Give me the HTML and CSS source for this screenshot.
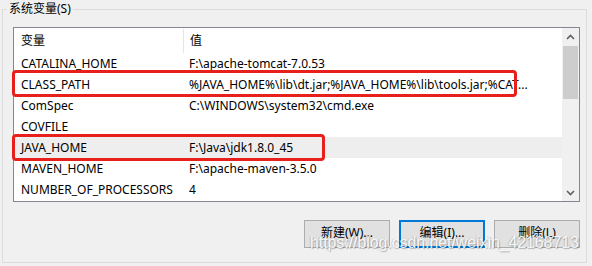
FILE: index.html
```html
<!DOCTYPE html>
<html lang="zh-CN">
<head>
    <meta charset="UTF-8">
    <title>系统变量</title>
    <link rel="stylesheet" href="styles.css">
</head>
<body>
    <div class="group">
        <div class="group-title">系统变量(S)</div>

        <div class="list">
            <div class="list-body">
                <div class="list-head">
                    <div class="col-name">变量</div>
                    <div class="col-value">值</div>
                </div>
                <div class="row"><div class="col-name">CATALINA_HOME</div><div class="col-value">F:\apache-tomcat-7.0.53</div></div>
                <div class="row"><div class="col-name">CLASS_PATH</div><div class="col-value">%JAVA_HOME%\lib\dt.jar;%JAVA_HOME%\lib\tools.jar;%CAT...</div></div>
                <div class="row"><div class="col-name">ComSpec</div><div class="col-value">C:\WINDOWS\system32\cmd.exe</div></div>
                <div class="row"><div class="col-name">COVFILE</div><div class="col-value"></div></div>
                <div class="row selected"><div class="col-name">JAVA_HOME</div><div class="col-value">F:\Java\jdk1.8.0_45</div></div>
                <div class="row"><div class="col-name">MAVEN_HOME</div><div class="col-value">F:\apache-maven-3.5.0</div></div>
                <div class="row"><div class="col-name">NUMBER_OF_PROCESSORS</div><div class="col-value">4</div></div>
            </div>

            <!-- vertical scrollbar -->
            <div class="scrollbar">
                <div class="scroll-btn">
                    <svg width="9" height="6" viewBox="0 0 9 6"><path d="M1 5 L4.5 1.5 L8 5" fill="none" stroke="#606060" stroke-width="1.6"/></svg>
                </div>
                <div class="thumb"></div>
                <div class="scroll-btn bottom">
                    <svg width="9" height="6" viewBox="0 0 9 6"><path d="M1 1 L4.5 4.5 L8 1" fill="none" stroke="#606060" stroke-width="1.6"/></svg>
                </div>
            </div>
        </div>

        <div class="actions">
            <button class="btn">新建(W)...</button>
            <button class="btn primary">编辑(I)...</button>
            <button class="btn">删除(L)</button>
        </div>
    </div>

    <!-- annotations drawn on top of the screenshot -->
    <div class="mark mark-classpath"></div>
    <div class="mark mark-javahome"></div>
    <div class="watermark">https://blog.csdn.net/weixin_42168713</div>
</body>
</html>
```

FILE: styles.css
```css
body {
    margin: 0;
    background-color: #f0f0f0;
    font-family: "Noto Sans", "Noto Sans CJK SC", sans-serif;
    font-size: 12px;
    color: #000;
    width: 592px;
    height: 266px;
    overflow: hidden;
    position: relative;
}
.group {
    margin: 9px 0 0 2px;
    width: 585px;
    height: 254px;
    border: 1px solid #dcdcdc;
    box-sizing: border-box;
    padding: 0 6px 0 10px;
}
.group-title {
    width: fit-content;
    margin: -9px 0 0 -6px;
    padding: 0 2px;
    line-height: 16px;
    background-color: #f0f0f0;
}
.list {
    margin-top: 10px;
    height: 175px;
    border: 1px solid #828790;
    box-sizing: border-box;
    background-color: #fff;
    display: flex;
}
.list-body {
    flex: 1;
}
.list-head {
    display: flex;
    height: 25px;
    line-height: 25px;
}
.list-head .col-name {
    border-right: 1px solid #e5e5e5;
    height: 24px;
    margin-top: 1px;
    line-height: 24px;
}
.row {
    display: flex;
    height: 21px;
    line-height: 21px;
}
.row.selected {
    background-color: #eeeeee;
}
.col-name {
    width: 162px;
    padding-left: 7px;
    white-space: nowrap;
}
.col-value {
    padding-left: 6px;
    white-space: nowrap;
}
.scrollbar {
    width: 17px;
    background-color: #f0f0f0;
    display: flex;
    flex-direction: column;
}
.scroll-btn {
    height: 17px;
    display: flex;
    align-items: center;
    justify-content: center;
}
.scroll-btn.bottom {
    margin-top: auto;
}
.thumb {
    margin: 1px 1px 0 1px;
    height: 53px;
    background-color: #cdcdcd;
}
.actions {
    display: flex;
    justify-content: flex-end;
    gap: 9px;
    margin-top: 18px;
}
.btn {
    width: 86px;
    height: 28px;
    background-color: #e1e1e1;
    border: 1px solid #adadad;
    font-family: "Noto Sans", "Noto Sans CJK SC", sans-serif;
    font-size: 12px;
    line-height: 16px;
    color: #000;
    padding: 0 0 2px 0;
}
.btn.primary {
    border: 2px solid #0078d7;
}
.mark {
    position: absolute;
    border: 3px solid #e8201c;
    border-radius: 4px;
    box-sizing: border-box;
}
.mark-classpath {
    left: 12px;
    top: 70px;
    width: 505px;
    height: 27px;
}
.mark-javahome {
    left: 12px;
    top: 134px;
    width: 313px;
    height: 27px;
}
.watermark {
    position: absolute;
    left: 310px;
    top: 233px;
    font-family: "Liberation Sans", sans-serif;
    font-size: 15.8px;
    transform: scaleY(1.06);
    transform-origin: left top;
    color: rgba(255, 255, 255, 0.9);
    text-shadow: 1px 1px 1px rgba(0, 0, 0, 0.25), -1px 0 1px rgba(0, 0, 0, 0.15);
    white-space: nowrap;
}
```
